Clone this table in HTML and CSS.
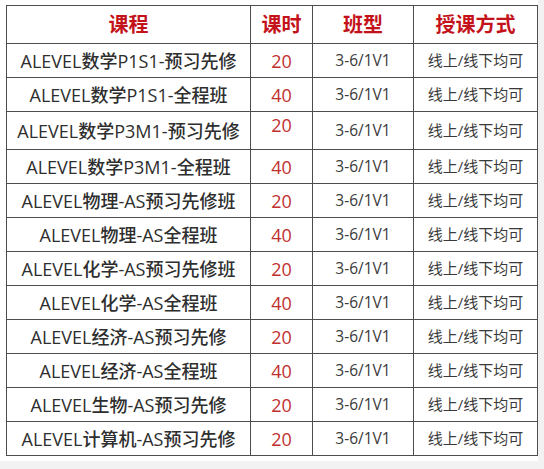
FILE: index.html
```html
<!DOCTYPE html>
<html lang="zh-CN">
<head>
<meta charset="utf-8">
<title>课程表</title>
<link rel="stylesheet" href="styles.css">
</head>
<body>
<div class="sheet">
  <table class="courses">
    <colgroup>
      <col class="c-name"><col class="c-hours"><col class="c-type"><col class="c-mode">
    </colgroup>
    <thead>
      <tr><th>课程</th><th>课时</th><th>班型</th><th>授课方式</th></tr>
    </thead>
    <tbody>
      <tr><td class="name">ALEVEL数学P1S1-预习先修</td><td class="num">20</td><td class="type">3-6/1V1</td><td class="mode">线上/线下均可</td></tr>
      <tr><td class="name">ALEVEL数学P1S1-全程班</td><td class="num">40</td><td class="type">3-6/1V1</td><td class="mode">线上/线下均可</td></tr>
      <tr><td class="name">ALEVEL数学P3M1-预习先修</td><td class="num up">20</td><td class="type">3-6/1V1</td><td class="mode">线上/线下均可</td></tr>
      <tr><td class="name">ALEVEL数学P3M1-全程班</td><td class="num">40</td><td class="type">3-6/1V1</td><td class="mode">线上/线下均可</td></tr>
      <tr><td class="name">ALEVEL物理-AS预习先修班</td><td class="num">20</td><td class="type">3-6/1V1</td><td class="mode">线上/线下均可</td></tr>
      <tr><td class="name">ALEVEL物理-AS全程班</td><td class="num">40</td><td class="type">3-6/1V1</td><td class="mode">线上/线下均可</td></tr>
      <tr><td class="name">ALEVEL化学-AS预习先修班</td><td class="num">20</td><td class="type">3-6/1V1</td><td class="mode">线上/线下均可</td></tr>
      <tr><td class="name">ALEVEL化学-AS全程班</td><td class="num">40</td><td class="type">3-6/1V1</td><td class="mode">线上/线下均可</td></tr>
      <tr><td class="name">ALEVEL经济-AS预习先修</td><td class="num">20</td><td class="type">3-6/1V1</td><td class="mode">线上/线下均可</td></tr>
      <tr><td class="name">ALEVEL经济-AS全程班</td><td class="num">40</td><td class="type">3-6/1V1</td><td class="mode">线上/线下均可</td></tr>
      <tr><td class="name">ALEVEL生物-AS预习先修</td><td class="num">20</td><td class="type">3-6/1V1</td><td class="mode">线上/线下均可</td></tr>
      <tr><td class="name">ALEVEL计算机-AS预习先修</td><td class="num">20</td><td class="type">3-6/1V1</td><td class="mode">线上/线下均可</td></tr>
    </tbody>
  </table>
</div>
</body>
</html>
```
FILE: styles.css
```css
html, body {
  margin: 0;
  padding: 0;
  background: #f2f2f2;
}
body {
  font-family: "Open Sans", "Noto Sans CJK SC", sans-serif;
  color: #333;
}
.sheet {
  width: 538px;
  height: 461px;
  background: #fff;
  box-sizing: border-box;
  padding: 5px 0 0 6px;
}
.courses {
  width: 531px;
  border-collapse: collapse;
  table-layout: fixed;
}
.c-name { width: 244px; }
.c-hours { width: 62px; }
.c-type { width: 101px; }
.c-mode { width: 124px; }
.courses th,
.courses td {
  border: 1px solid #4d4d4d;
  text-align: center;
  vertical-align: middle;
  padding: 0;
  white-space: nowrap;
  overflow: hidden;
}
.courses th {
  height: 37px;
  font-size: 20px;
  font-weight: bold;
  color: #c4121b;
  line-height: 1;
}
.courses td {
  height: 33px;
  line-height: 1;
}
.name {
  font-size: 18px;
  font-weight: 500;
  color: #2e2e2e;
}
.num {
  font-size: 18px;
  color: #c0302f;
}
.num.up {
  vertical-align: top;
  padding-top: 4px;
}
.type {
  font-size: 15.5px;
  color: #3a3a3a;
}
.mode {
  font-size: 15px;
  color: #3a3a3a;
}
```
